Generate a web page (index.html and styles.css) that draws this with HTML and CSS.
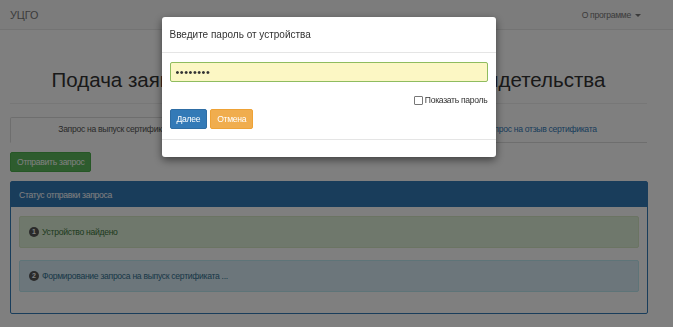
FILE: index.html
```html
<!DOCTYPE html>
<html lang="ru">
<head>
<meta charset="UTF-8">
<title>УЦГО - Подача заявки</title>
<link rel="stylesheet" href="styles.css">
</head>
<body>

<nav class="navbar">
    <div class="navbar-inner">
        <a class="brand" href="#">УЦГО</a>
        <a class="menu" href="#">О программе <span class="caret"></span></a>
    </div>
</nav>

<div class="container">
    <h1 class="page-title">Подача заявки на выпуск сертификата или свидетельства</h1>

    <ul class="tabs">
        <li class="active"><a href="#">Запрос на выпуск сертификата</a></li>
        <li><a href="#">Запрос на выпуск свидетельства</a></li>
        <li><a href="#">Запрос на отзыв сертификата</a></li>
    </ul>

    <button type="button" class="btn btn-success">Отправить запрос</button>

    <div class="panel">
        <div class="panel-heading">Статус отправки запроса</div>
        <div class="panel-body">
            <div class="alert alert-success"><span class="step">1</span>Устройство найдено</div>
            <div class="alert alert-info"><span class="step">2</span>Формирование запроса на выпуск сертификата ...</div>
        </div>
    </div>
</div>

<div class="backdrop"></div>

<div class="modal-wrap">
    <div class="modal">
        <div class="modal-header">Введите пароль от устройства</div>
        <div class="modal-body">
            <input type="password" class="password" value="12345678">
            <label class="show-pass"><span class="box"></span>Показать пароль</label>
            <div class="actions">
                <button type="button" class="btn btn-primary">Далее</button>
                <button type="button" class="btn btn-warning">Отмена</button>
            </div>
        </div>
        <div class="modal-footer"></div>
    </div>
</div>

</body>
</html>
```

FILE: styles.css
```css
body {
    font-family: "Liberation Sans", Arial, sans-serif;
    font-size: 8.6px;
    letter-spacing: -0.3px;
    line-height: 12px;
    color: #333;
    margin: 0;
    padding: 0;
    background-color: #fff;
}

a {
    color: #337ab7;
    text-decoration: none;
}

/* top bar */
.navbar {
    height: 30px;
    background-color: #f8f8f8;
    border-bottom: 1px solid #e7e7e7;
    box-sizing: border-box;
}

.navbar-inner {
    display: flex;
    justify-content: space-between;
    align-items: center;
    height: 29px;
    padding: 0 32px 0 10px;
}

.brand {
    color: #777;
    font-size: 10.8px;
    letter-spacing: 0;
}

.menu {
    color: #777;
}

.caret {
    display: inline-block;
    width: 0;
    height: 0;
    margin-left: 2px;
    vertical-align: middle;
    border-top: 3px solid #777;
    border-left: 3px solid transparent;
    border-right: 3px solid transparent;
}

.container {
    width: 637px;
    margin-left: 10px;
}

.page-title {
    font-size: 20.5px;
    letter-spacing: 0;
    font-weight: normal;
    line-height: 24px;
    text-align: center;
    margin: 38px 0 0;
    padding-bottom: 11px;
    border-bottom: 1px solid #eee;
}

/* tabs */
.tabs {
    display: flex;
    list-style: none;
    margin: 13px 0 0;
    padding: 0;
    border-bottom: 1px solid #ddd;
}

.tabs li {
    flex: 1;
    text-align: center;
    margin-bottom: -1px;
}

.tabs a {
    display: block;
    line-height: 12px;
    padding: 5px 0 7px;
    border: 1px solid transparent;
    border-radius: 2px 2px 0 0;
}

.tabs li.active a {
    color: #555;
    background-color: #fff;
    border-color: #ddd #ddd transparent;
}

/* buttons */
.btn {
    font-family: inherit;
    font-size: 8.6px;
    letter-spacing: -0.3px;
    line-height: 12px;
    padding: 3px 6px;
    border: 1px solid transparent;
    border-radius: 2px;
    color: #fff;
    cursor: pointer;
}

.btn-success {
    margin-top: 9px;
    height: 20px;
    background-color: #5cb85c;
    border-color: #4cae4c;
}

.btn-primary {
    background-color: #337ab7;
    border-color: #2e6da4;
}

.btn-warning {
    background-color: #f0ad4e;
    border-color: #eea236;
}

/* status panel */
.panel {
    margin-top: 9px;
    width: 638px;
    border: 1px solid #337ab7;
    border-radius: 2px;
    box-sizing: border-box;
}

.panel-heading {
    background-color: #337ab7;
    color: #fff;
    padding: 7px 8px 6px;
    line-height: 12px;
}

.panel-body {
    padding: 9px 8px;
}

.alert {
    display: flex;
    align-items: center;
    height: 32px;
    box-sizing: border-box;
    padding: 0 9px;
    border: 1px solid transparent;
    border-radius: 2px;
    margin-bottom: 12px;
}

.alert-success {
    background-color: #dff0d8;
    border-color: #d6e9c6;
    color: #3c763d;
}

.alert-info {
    background-color: #d9edf7;
    border-color: #bce8f1;
    color: #31708f;
}

.step {
    display: inline-block;
    width: 10px;
    height: 10px;
    line-height: 10px;
    margin-right: 3px;
    border-radius: 50%;
    background-color: #555;
    color: #fff;
    font-size: 7px;
    letter-spacing: 0;
    font-weight: bold;
    text-align: center;
}

/* password dialog */
.backdrop {
    position: fixed;
    top: 0;
    left: 0;
    right: 0;
    bottom: 0;
    background-color: rgba(0, 0, 0, 0.5);
}

.modal-wrap {
    position: fixed;
    top: 0;
    left: 0;
    right: 16px;
    display: flex;
    justify-content: center;
    padding-top: 17px;
}

.modal {
    width: 334px;
    background-color: #fff;
    border-radius: 3px;
    box-shadow: 0 3px 9px rgba(0, 0, 0, 0.5);
}

.modal-header {
    font-size: 10px;
    letter-spacing: 0;
    line-height: 14px;
    color: #333;
    padding: 11px 8px 10px;
    border-bottom: 1px solid #e5e5e5;
}

.modal-body {
    padding: 9px 8px 10px;
}

.password {
    display: block;
    width: 318px;
    height: 20px;
    box-sizing: border-box;
    padding: 0 5px;
    font-family: inherit;
    font-size: 11px;
    letter-spacing: 0.5px;
    color: #333;
    background-color: #fcf7c4;
    border: 1px solid #8fbc5f;
    border-radius: 2px;
    outline: none;
}

.show-pass {
    display: flex;
    justify-content: flex-end;
    align-items: center;
    margin-top: 12px;
    line-height: 12px;
}

.box {
    width: 7px;
    height: 7px;
    margin-right: 2px;
    border: 1px solid #777;
    border-radius: 1px;
    background-color: #fff;
}

.actions {
    display: flex;
    gap: 3px;
    margin-top: 3px;
}

.actions .btn {
    height: 20px;
}

.modal-footer {
    height: 17px;
    border-top: 1px solid #e5e5e5;
}
```
